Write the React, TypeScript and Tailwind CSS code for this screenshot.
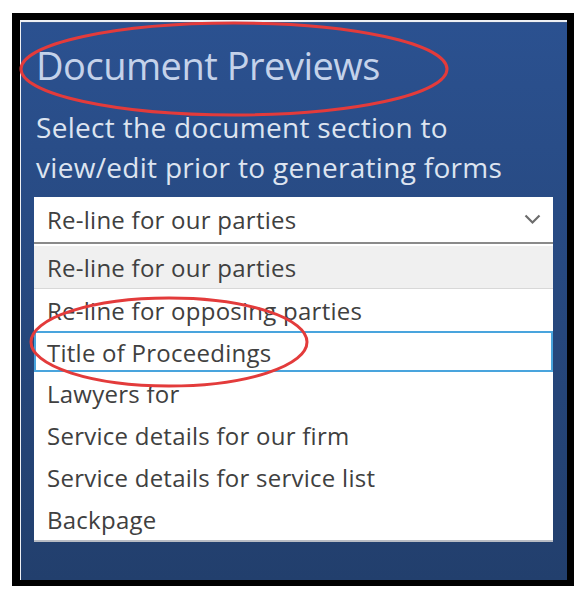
import React from "react";

const items = [
  "Re-line for our parties",
  "Re-line for opposing parties",
  "Title of Proceedings",
  "Lawyers for",
  "Service details for our firm",
  "Service details for service list",
  "Backpage",
];

export default function App() {
  const font = { fontFamily: '"Open Sans", "Noto Sans", sans-serif' };
  return (
    <div className="relative w-[585px] h-[598px] bg-white pt-[13px] pl-[12px]" style={font}>
      <div className="w-[562px] h-[573px] bg-black pt-[7px] pl-[8px] pr-[7px] pb-[6px]">
        <div className="h-full bg-[#eef0f4] pt-[2px] pl-[1px]">
          <div className="h-full bg-gradient-to-b from-[#2b5190] to-[#223f6d] border-t border-[#3a5a90] flex flex-col">
            <div className="pl-[15px] pt-[18px] text-[38px] leading-[48px] text-[#c4d2ea] tracking-[-0.5px]">
              Document Previews
            </div>
            <div className="pl-[15px] mt-[18px] text-[28px] leading-[40px] text-[#dde4f0] tracking-[0.3px]">
              <div>Select the document section to</div>
              <div>view/edit prior to generating forms</div>
            </div>
            <div className="ml-[13px] mr-[14px] mt-[10px] bg-white">
              <div className="h-[47px] bg-white border-b-2 border-[#8a8a8a] flex items-center justify-between pl-[13px] pr-[12px] text-[24px] tracking-[0.25px] text-[#404040]">
                <span>Re-line for our parties</span>
                <svg width="17" height="11" viewBox="0 0 17 11">
                  <path d="M1.5 1.5 L8.5 8.5 L15.5 1.5" fill="none" stroke="#6c6c6c" strokeWidth="2.2" />
                </svg>
              </div>
              <div className="mt-[2px] bg-white border-b-2 border-[#b8bcc4] text-[24px] tracking-[0.25px] text-[#404040]">
                {items.map((t, i) => (
                  <div
                    key={t}
                    className={
                      i === 0
                        ? "h-[43px] flex items-center pl-[13px] pt-[2px] bg-[#f0f0f0] border-b border-[#d8d8d8]"
                        : i === 2
                        ? "h-[41px] flex items-center pl-[11px] pt-[2px] border-2 border-[#49a4dd]"
                        : "h-[42px] flex items-center pl-[13px] pt-[2px]"
                    }
                  >
                    {t}
                  </div>
                ))}
              </div>
            </div>
          </div>
        </div>
      </div>
      <svg className="absolute left-0 top-0 pointer-events-none" width="585" height="598">
        <ellipse cx="234" cy="69" rx="213" ry="46" fill="none" stroke="#e33b3b" strokeWidth="3" />
        <ellipse cx="169" cy="342" rx="138" ry="44" fill="none" stroke="#e33b3b" strokeWidth="3" />
      </svg>
    </div>
  );
}
